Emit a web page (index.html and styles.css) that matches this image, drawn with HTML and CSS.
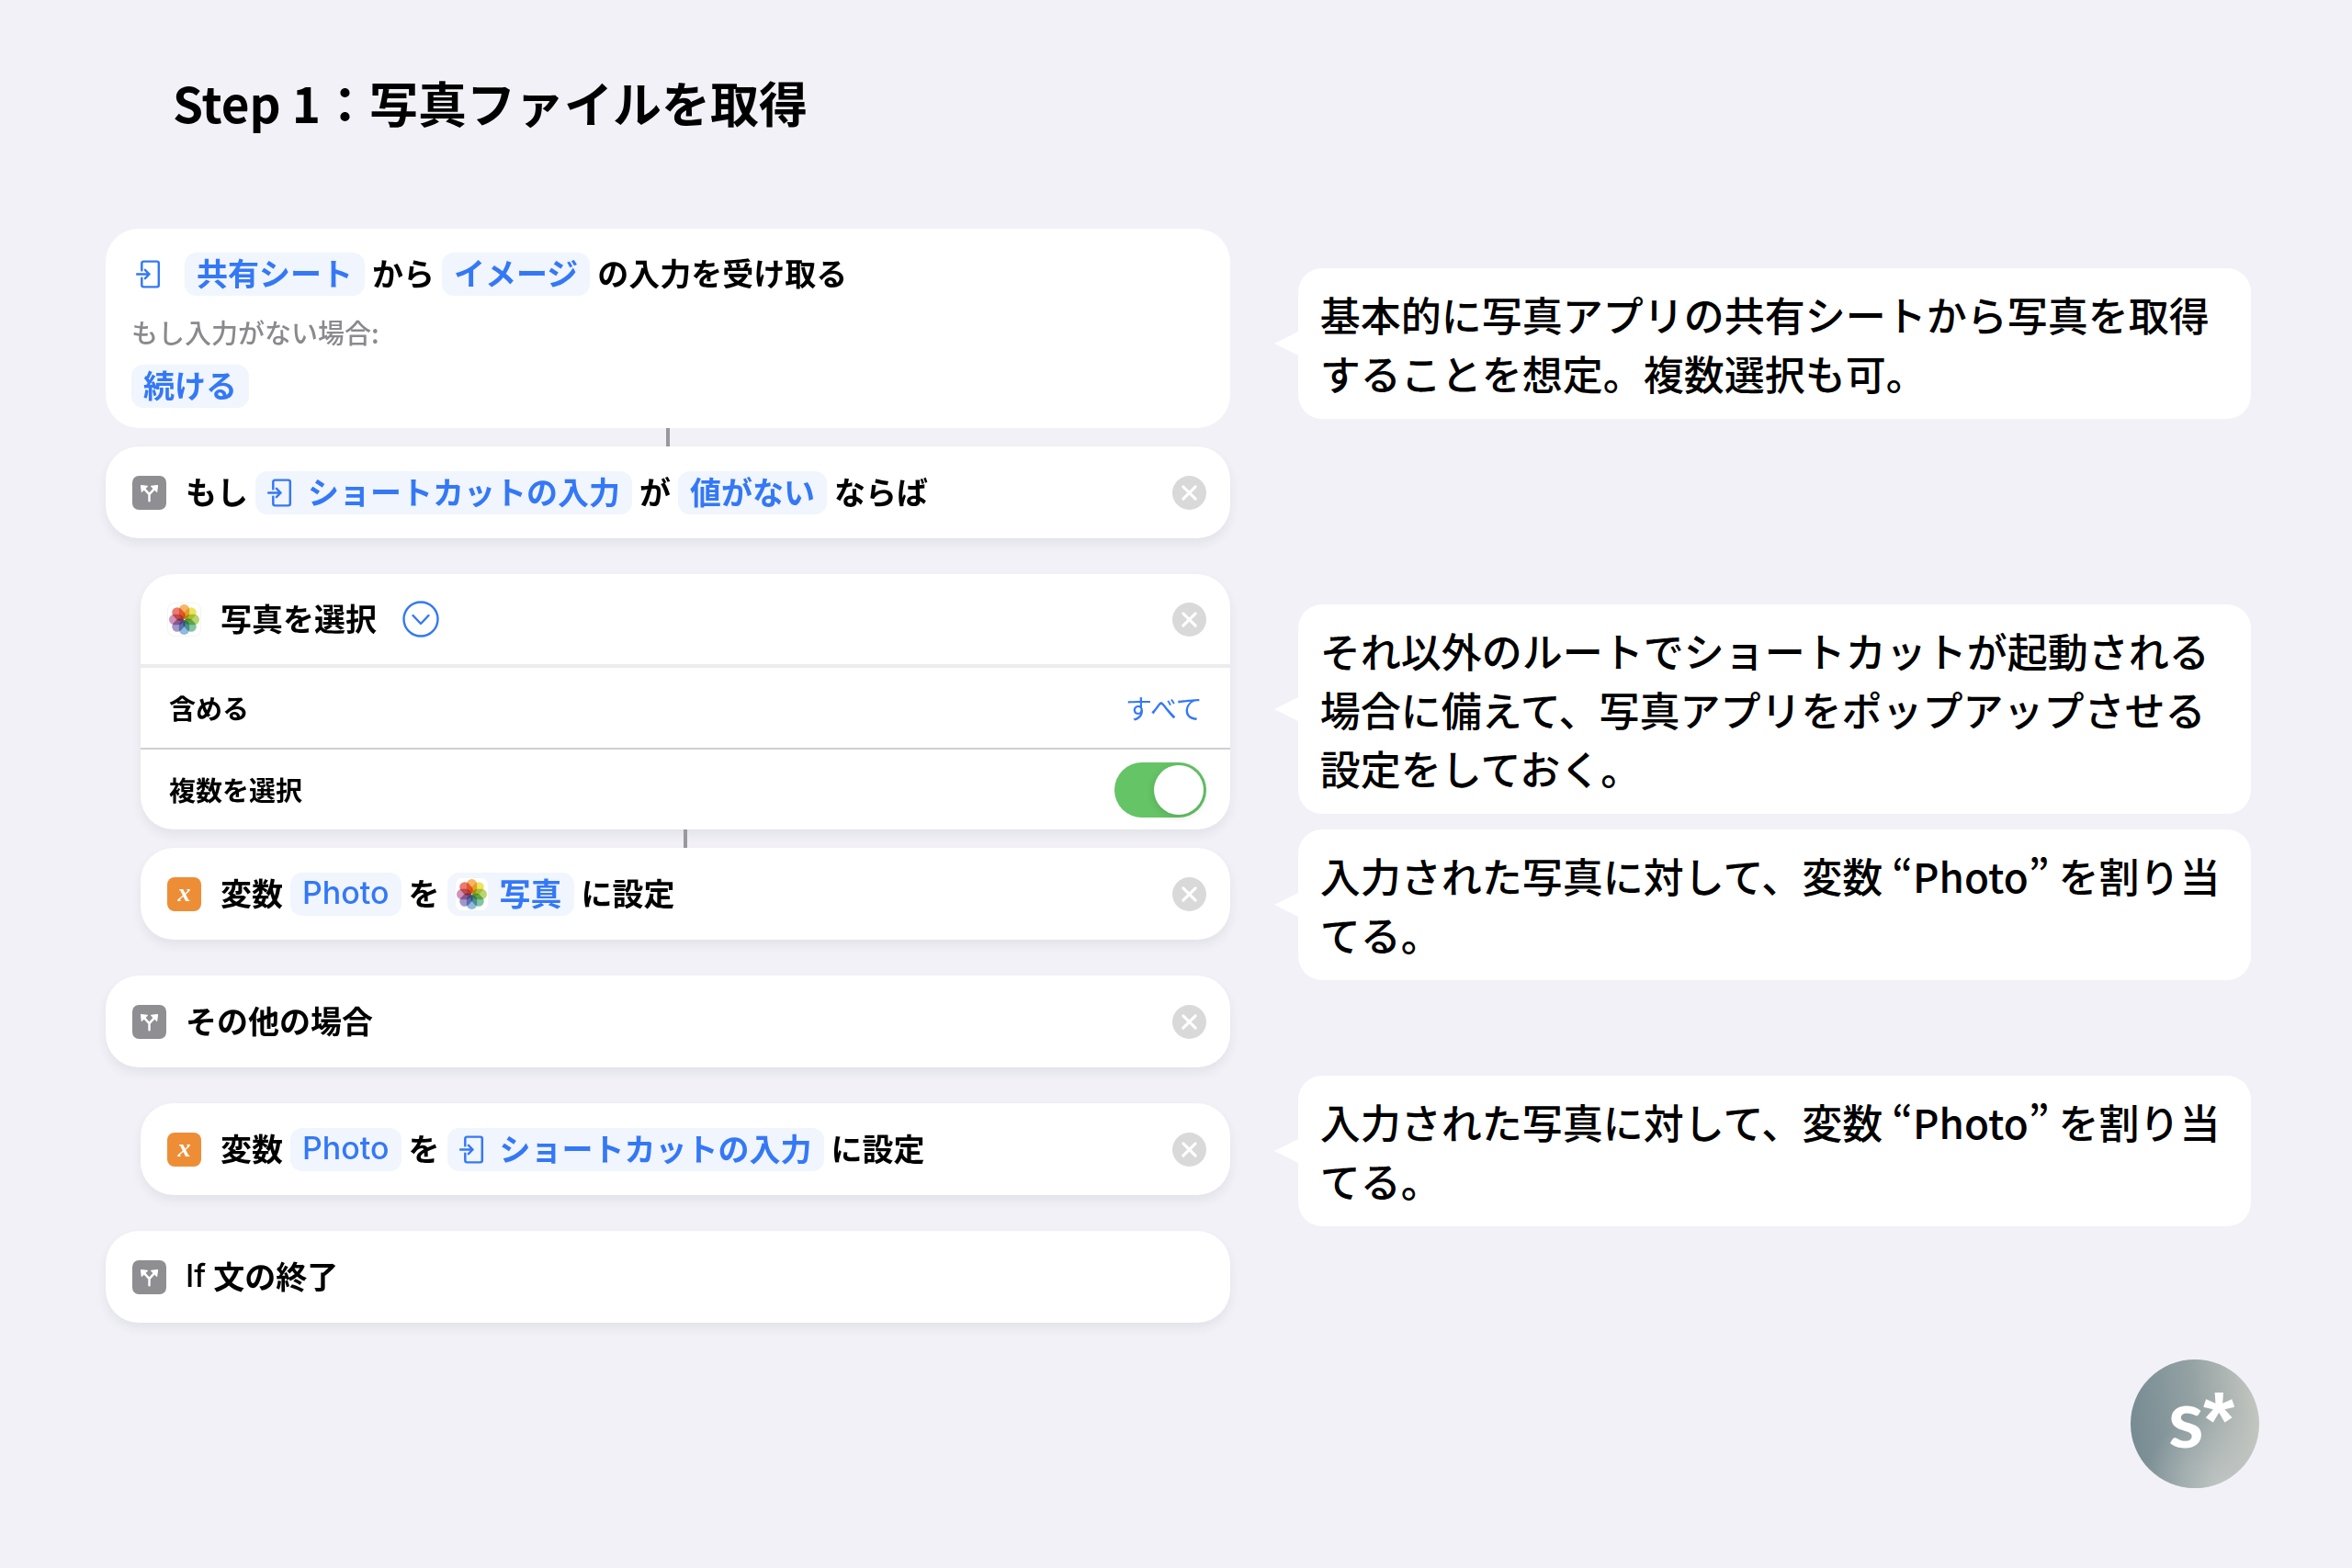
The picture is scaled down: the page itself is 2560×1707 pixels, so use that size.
FILE: index.html
```html
<!DOCTYPE html>
<html lang="ja">

<head>
	<meta charset="UTF-8">
	<meta name="viewport" content="width=device-width, initial-scale=1">
	<title>Step 1：写真ファイルを取得</title>
	<link rel="stylesheet" href="styles.css">
</head>

<body>
	<!-- shared icons -->
	<svg class="sprite" aria-hidden="true">
		<symbol id="icon-input" viewBox="0 0 36 36">
			<path d="M11 14V6.500a2 2 0 0 1 2-2H27a2 2 0 0 1 2 2V29.500a2 2 0 0 1-2 2H13a2 2 0 0 1-2-2V22M6 18H19M14.500 13.500L19 18L14.500 22.500" fill="none" stroke="#3478f6" stroke-width="2.400" stroke-linecap="round" stroke-linejoin="round"/>
		</symbol>
		<symbol id="icon-branch" viewBox="0 0 36 36">
			<rect width="36" height="36" rx="7" fill="#8e8e93"/>
			<path d="M18 26.500V19.500L12 13M18 19.500L24 13" fill="none" stroke="#fff" stroke-width="2.400" stroke-linecap="round" stroke-linejoin="round"/>
			<path d="M9.200 10.200L16 11L10 17ZM26.800 10.200L20 11L26 17Z" fill="#fff" stroke="#fff" stroke-linejoin="round"/>
		</symbol>
		<symbol id="icon-photos" viewBox="0 0 36 36">
			<rect x=".5" y=".5" width="35" height="35" rx="7" fill="#fff" stroke="#f4f4f6"/>
			<g class="petals">
				<rect x="12.500" y="2" width="11" height="15.500" rx="5.500" fill="#f5a13c"/>
				<rect x="12.500" y="2" width="11" height="15.500" rx="5.500" fill="#e8dc3a" transform="rotate(45 18 18)"/>
				<rect x="12.500" y="2" width="11" height="15.500" rx="5.500" fill="#a6cb4b" transform="rotate(90 18 18)"/>
				<rect x="12.500" y="2" width="11" height="15.500" rx="5.500" fill="#62b58c" transform="rotate(135 18 18)"/>
				<rect x="12.500" y="2" width="11" height="15.500" rx="5.500" fill="#72a9da" transform="rotate(180 18 18)"/>
				<rect x="12.500" y="2" width="11" height="15.500" rx="5.500" fill="#8c7cbc" transform="rotate(225 18 18)"/>
				<rect x="12.500" y="2" width="11" height="15.500" rx="5.500" fill="#c478a8" transform="rotate(270 18 18)"/>
				<rect x="12.500" y="2" width="11" height="15.500" rx="5.500" fill="#e8584a" transform="rotate(315 18 18)"/>
			</g>
		</symbol>
		<symbol id="icon-close" viewBox="0 0 36 36">
			<circle cx="18" cy="18" r="18" fill="#d9d9da"/>
			<path d="M11.500 11.500L24.500 24.500M24.500 11.500L11.500 24.500" stroke="#fff" stroke-width="3" stroke-linecap="round"/>
		</symbol>
		<symbol id="icon-chevron" viewBox="0 0 40 40">
			<circle cx="20" cy="20" r="18.500" fill="none" stroke="#3478f6" stroke-width="2.400"/>
			<path d="M11.500 16L20 25L28.500 16" fill="none" stroke="#3478f6" stroke-width="2.400" stroke-linecap="round" stroke-linejoin="round"/>
		</symbol>
	</svg>

	<h1 class="title">Step 1：写真ファイルを取得</h1>

	<main class="columns">
		<section class="actions">
			<div class="card receive">
				<div class="line">
					<svg class="icon"><use href="#icon-input"/></svg>
					<div class="sentence">
						<button type="button" class="pill">共有シート</button>
						<span>から</span>
						<button type="button" class="pill">イメージ</button>
						<span>の入力を受け取る</span>
					</div>
				</div>
				<p class="hint">もし入力がない場合:</p>
				<button type="button" class="pill">続ける</button>
			</div>

			<div class="connector"></div>

			<div class="card line">
				<svg class="icon"><use href="#icon-branch"/></svg>
				<div class="sentence">
					<span>もし</span>
					<button type="button" class="pill with-icon"><svg class="icon"><use href="#icon-input"/></svg>ショートカットの入力</button>
					<span>が</span>
					<button type="button" class="pill">値がない</button>
					<span>ならば</span>
				</div>
				<button type="button" class="close" aria-label="削除"><svg class="icon"><use href="#icon-close"/></svg></button>
			</div>

			<div class="block">
				<div class="card picker">
					<div class="line picker-head">
						<svg class="icon"><use href="#icon-photos"/></svg>
						<div class="sentence"><span>写真を選択</span></div>
						<button type="button" class="expand" aria-label="詳細"><svg><use href="#icon-chevron"/></svg></button>
						<button type="button" class="close" aria-label="削除"><svg class="icon"><use href="#icon-close"/></svg></button>
					</div>
					<div class="option">
						<label for="include">含める</label>
						<select id="include">
							<option>すべて</option>
						</select>
					</div>
					<div class="option">
						<label for="multiple">複数を選択</label>
						<input type="checkbox" class="switch" id="multiple" checked>
					</div>
				</div>

				<div class="connector"></div>

				<div class="card line">
					<span class="icon variable">x</span>
					<div class="sentence">
						<span>変数</span>
						<button type="button" class="pill latin">Photo</button>
						<span>を</span>
						<button type="button" class="pill with-icon"><svg class="icon"><use href="#icon-photos"/></svg>写真</button>
						<span>に設定</span>
					</div>
					<button type="button" class="close" aria-label="削除"><svg class="icon"><use href="#icon-close"/></svg></button>
				</div>
			</div>

			<div class="card line">
				<svg class="icon"><use href="#icon-branch"/></svg>
				<div class="sentence"><span>その他の場合</span></div>
				<button type="button" class="close" aria-label="削除"><svg class="icon"><use href="#icon-close"/></svg></button>
			</div>

			<div class="block">
				<div class="card line">
					<span class="icon variable">x</span>
					<div class="sentence">
						<span>変数</span>
						<button type="button" class="pill latin">Photo</button>
						<span>を</span>
						<button type="button" class="pill with-icon"><svg class="icon"><use href="#icon-input"/></svg>ショートカットの入力</button>
						<span>に設定</span>
					</div>
					<button type="button" class="close" aria-label="削除"><svg class="icon"><use href="#icon-close"/></svg></button>
				</div>
			</div>

			<div class="card line">
				<svg class="icon"><use href="#icon-branch"/></svg>
				<div class="sentence"><span class="latin">If</span><span>文の終了</span></div>
			</div>
		</section>

		<aside class="notes">
			<p class="note note-receive">基本的に写真アプリの共有シートから写真を取得することを想定。複数選択も可。</p>
			<p class="note note-picker">それ以外のルートでショートカットが起動される場合に備えて、写真アプリをポップアップさせる設定をしておく。</p>
			<p class="note note-variable">入力された写真に対して、変数 “Photo” を割り当てる。</p>
			<p class="note note-otherwise">入力された写真に対して、変数 “Photo” を割り当てる。</p>
		</aside>
	</main>

	<footer class="footer">
		<svg class="logo" viewBox="0 0 140 140" role="img" aria-label="s*">
			<defs>
				<linearGradient id="logo-base" x1="0" y1=".55" x2="1" y2=".45">
					<stop offset="0" stop-color="#768b92"/>
					<stop offset=".5" stop-color="#93a1a3"/>
					<stop offset="1" stop-color="#c3c6c0"/>
				</linearGradient>
				<radialGradient id="logo-light" cx=".7" cy="1" r=".6">
					<stop offset="0" stop-color="#cdd0cd" stop-opacity=".7"/>
					<stop offset="1" stop-color="#cdd0cd" stop-opacity="0"/>
				</radialGradient>
			</defs>
			<circle cx="70" cy="70" r="70" fill="url(#logo-base)"/>
			<circle cx="70" cy="70" r="70" fill="url(#logo-light)"/>
			<text class="logo-s" x="41" y="96">s</text>
			<text class="logo-star" x="79" y="96">*</text>
		</svg>
	</footer>
</body>

</html>
```
FILE: styles.css
```css
* {
	box-sizing: border-box;
}
body {
	margin: 0;
	min-height: 100vh;
	background: #f1f1f7;
	color: #000;
	font-family: "Noto Sans CJK JP", sans-serif;
	font-size: 34px;
	font-weight: 500;
}
button, select {
	margin: 0;
	padding: 0;
	border: 0;
	background: none;
	color: #3478f6;
	font: inherit;
	cursor: pointer;
}
svg {
	display: block;
}
.sprite {
	display: none;
}
.petals rect {
	mix-blend-mode: multiply;
	opacity: 0.8;
}

.title {
	margin: 0;
	padding: 72px 188px 99px;
	font-size: 53px;
	line-height: 78px;
	font-weight: 700;
}
.columns {
	display: grid;
	grid-template-columns: 1.18fr 1fr;
	column-gap: 74px;
	padding: 0 110px 0 115px;
}

/* action cards */
.card {
	background: #fff;
	border-radius: 36px;
	box-shadow: 0 6px 12px rgba(40, 40, 60, 0.07);
	font-weight: 700;
	line-height: 43px;
}
.actions > .card + .card, .actions > .block, .block + .card {
	margin-top: 39px;
}
.block {
	padding-left: 38px;
}
.connector {
	width: 4px;
	height: 20px;
	margin: 0 auto;
	background: #98989d;
}
.line {
	display: flex;
	align-items: center;
}
.card.line {
	height: 100px;
	padding: 0 26px 0 29px;
}
.icon {
	flex: none;
	width: 37px;
	height: 37px;
}
.sentence {
	display: flex;
	align-items: center;
	gap: 8px;
	margin-left: 21px;
}
.sentence span {
	padding-bottom: 4px;
}
.pill {
	display: inline-flex;
	align-items: center;
	height: 47px;
	padding: 0 13px 4px;
	border-radius: 13px;
	background: #f0f5fe;
}
.pill.with-icon {
	gap: 12px;
	padding-left: 8px;
}
.pill .icon {
	margin-top: 4px;
}
.latin {
	font-family: Inter, sans-serif;
	font-weight: 500;
}
.close {
	margin-left: auto;
}
.receive {
	display: flex;
	flex-direction: column;
	align-items: flex-start;
	padding: 26px 28px 22px;
	box-shadow: none;
}
.hint {
	margin: 18px 0 14px;
	color: #8a8a8e;
	font-size: 29px;
	font-weight: 500;
}
.variable {
	border-radius: 8px;
	background: #ed8e37;
	color: #fff;
	font: italic bold 28px/33px "Liberation Serif", serif;
	text-align: center;
}

/* photo picker card */
.picker-head {
	height: 98px;
	padding: 0 26px 0 29px;
}
.expand svg {
	width: 40px;
	height: 40px;
	margin-left: 28px;
}
.option {
	display: flex;
	align-items: center;
	justify-content: space-between;
	height: 89px;
	padding: 0 26px 0 31px;
	border-top: 2px solid #d0d0d2;
	font-size: 29px;
}
.picker-head + .option {
	height: 91px;
	border-top: 4px solid #ececee;
}
.option select {
	appearance: none;
	padding-right: 4px;
	font-weight: 400;
	text-align: right;
}
.switch {
	appearance: none;
	display: flex;
	justify-content: flex-end;
	width: 100px;
	height: 60px;
	margin: 0;
	padding: 3px;
	border-radius: 30px;
	background: #65c466;
	cursor: pointer;
}
.switch::before {
	content: "";
	width: 54px;
	border-radius: 50%;
	background: #fff;
	box-shadow: 0 2px 8px rgba(0, 0, 0, 0.15);
}
.switch:not(:checked) {
	justify-content: flex-start;
	background: #e4e4e6;
}

/* speech bubbles */
.note {
	position: relative;
	margin: 0;
	padding: 18px 24px;
	border-radius: 26px;
	background: #fff;
	font-size: 44px;
	line-height: 64px;
}
.note::before {
	content: "";
	position: absolute;
	top: calc(50% - 13px);
	right: 100%;
	border: solid transparent;
	border-width: 13px 26px 13px 0;
	border-right-color: #fff;
}
.note-receive {
	margin-top: 43px;
}
.note-picker {
	margin-top: 202px;
}
.note-variable {
	margin-top: 17px;
}
.note-otherwise {
	margin-top: 104px;
}

.footer {
	display: flex;
	justify-content: flex-end;
	padding: 40px 101px;
}
.logo {
	width: 140px;
	height: 140px;
}
.logo text {
	fill: #fff;
	font-weight: 700;
}
.logo-s {
	font-family: Lato, sans-serif;
	font-size: 88px;
}
.logo-star {
	font-family: "Liberation Sans", sans-serif;
	font-size: 88px;
}
```
